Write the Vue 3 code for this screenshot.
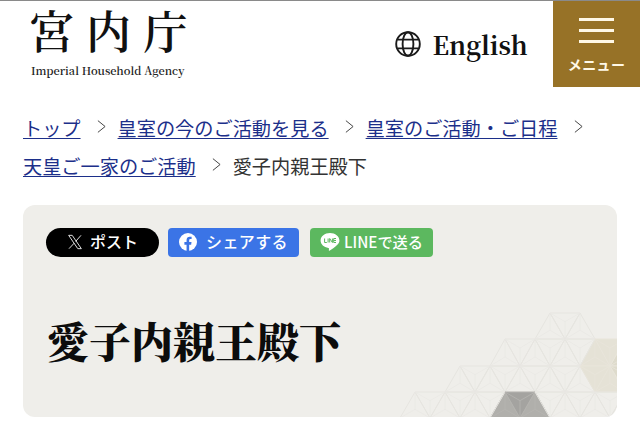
<script setup>
const crumbs = [
  { text: 'トップ', link: true },
  { text: '皇室の今のご活動を見る', link: true },
  { text: '皇室のご活動・ご日程', link: true },
  { text: '天皇ご一家のご活動', link: true },
  { text: '愛子内親王殿下', link: false },
]

const W = 30
const rows = [
  { y: 313, h: 26, topX: 550, botX: 535, tops: 2, bots: 3 },
  { y: 339, h: 27, topX: 505, botX: 490, tops: 5, bots: 6 },
  { y: 366, h: 26, topX: 460, botX: 445, tops: 7, bots: 8 },
  { y: 392, h: 26, topX: 415, botX: 400, tops: 9, bots: 10 },
]

// triangles of the asanoha lattice, row by row
const tris = []
rows.forEach((r, ri) => {
  const yb = r.y + r.h
  for (let i = 0; i < r.bots - 1; i++) {
    tris.push({ pts: [[r.botX + i * W, yb], [r.botX + (i + 1) * W, yb], [r.topX + i * W, r.y]], row: ri })
  }
  for (let i = 0; i < r.tops - 1; i++) {
    tris.push({ pts: [[r.topX + i * W, r.y], [r.topX + (i + 1) * W, r.y], [r.botX + (i + 1) * W, yb]], row: ri })
  }
})

const shapes = tris.map((t, i) => {
  const cx = (t.pts[0][0] + t.pts[1][0] + t.pts[2][0]) / 3
  const cy = (t.pts[0][1] + t.pts[1][1] + t.pts[2][1]) / 3
  let fill = 'none'
  let edge = '#e6e5e0'
  let spoke = '#eae9e4'
  if (Math.hypot(cx - 610, cy - 366) < 24) {
    const far = cx > 610
    fill = far ? '#dedbcc' : '#e5e2d6'
    edge = '#e8e5da'
    spoke = '#e8e5da'
  }
  if (t.row === 3 && cx > 490 && cx < 550) {
    fill = cx > 515 && cx < 535 ? '#a4a3a0' : '#b0afab'
    edge = '#b4b3af'
    spoke = '#b6b5b1'
  }
  return {
    id: i,
    fill,
    edge,
    spoke,
    points: t.pts.map(p => p.join(',')).join(' '),
    spokes: t.pts.map(p => ({ x1: cx, y1: cy, x2: p[0], y2: p[1] })),
  }
})
</script>

<template>
  <div class="page">
    <header class="site-header">
      <div class="logo">
        <div class="logo-kanji">宮内庁</div>
        <div class="logo-en">Imperial Household Agency</div>
      </div>
      <div class="lang">
        <svg class="globe" viewBox="0 0 26 26" fill="none" stroke="#1a1a1a" stroke-width="1.9">
          <circle cx="13" cy="13" r="11.8" />
          <ellipse cx="13" cy="13" rx="5.4" ry="11.8" />
          <path d="M2.600 8.600h20.800M2.600 17.400h20.800" />
        </svg>
        <span class="lang-text">English</span>
      </div>
      <div class="menu-btn">
        <div class="menu-lines">
          <span></span><span></span><span></span>
        </div>
        <div class="menu-label">メニュー</div>
      </div>
    </header>

    <nav class="crumbs">
      <div v-for="c in crumbs" :key="c.text" class="crumb">
        <a v-if="c.link" class="crumb-link" href="#">{{ c.text }}</a>
        <span v-else class="crumb-now">{{ c.text }}</span>
        <svg v-if="c.link" class="chev" viewBox="0 0 10 16" fill="none" stroke="#444" stroke-width="1.1">
          <path d="M1 1.500l8 6.500-8 6.500" />
        </svg>
      </div>
    </nav>

    <section class="card">
      <svg class="pattern" viewBox="377 287 240 130" width="240" height="130">
        <g v-for="s in shapes" :key="s.id">
          <polygon :points="s.points" :fill="s.fill" :stroke="s.edge" stroke-width="1" />
          <line v-for="(l, j) in s.spokes" :key="j" :x1="l.x1" :y1="l.y1" :x2="l.x2" :y2="l.y2" :stroke="s.spoke" stroke-width="0.8" />
        </g>
      </svg>

      <div class="share">
        <a class="btn btn-x" href="#">
          <svg class="x-icon" viewBox="0 0 24 24" fill="none" stroke="#fff" stroke-width="1.3">
            <path d="M2.500 2h5.300L21.500 22h-5.300zM21 2l-8 9.200M10.700 13.800L3 22" />
          </svg>
          <span>ポスト</span>
        </a>
        <a class="btn btn-fb" href="#">
          <svg class="fb-icon" viewBox="0 0 20 20">
            <circle cx="10" cy="10" r="10" fill="#fff" />
            <path d="M8.400 20v-7H6v-3h2.400V7.900c0-2.500 1.400-3.800 3.600-3.800 1 0 2 .2 2 .2v2.400h-1.200c-1.200 0-1.500.7-1.500 1.500V10h2.600l-.4 3h-2.200v7z" fill="#3b74e6" />
          </svg>
          <span>シェアする</span>
        </a>
        <a class="btn btn-line" href="#">
          <svg class="line-icon" viewBox="0 0 20 20">
            <path d="M10 1C4.800 1 .6 4.300.6 8.500c0 3.700 3.300 6.900 7.800 7.400.9.200.6 1.200.4 2.200-.1.700.4.800 1 .4 1.800-1.100 5.100-3.100 7-5.300 2.100-1.700 2.600-3.200 2.600-4.700C19.400 4.300 15.200 1 10 1z" fill="#fff" />
            <path d="M4.600 6.500v4h2.200M8.100 6.500v4M9.700 10.500v-4l2.700 4v-4M16 6.500h-2.300v4H16M13.700 8.500H16" fill="none" stroke="#5cb85f" stroke-width="1" />
          </svg>
          <span>LINEで送る</span>
        </a>
      </div>

      <h1 class="title">愛子内親王殿下</h1>
    </section>
  </div>
</template>

<style scoped>
.page {
  width: 640px;
  height: 442px;
  overflow: hidden;
  background: #fff;
  border-top: 1px solid #8a8a8a;
  box-sizing: border-box;
  font-family: "Noto Sans CJK JP", "Liberation Sans", sans-serif;
}

.site-header {
  display: flex;
  align-items: flex-start;
  height: 86px;
}

.logo {
  width: 370px;
  padding: 1px 0 0 29px;
  box-sizing: border-box;
}

.logo-kanji {
  font-family: "Noto Serif CJK JP", "Noto Sans CJK JP", serif;
  font-size: 45px;
  font-weight: 600;
  line-height: 56px;
  letter-spacing: 12px;
  color: #111;
  white-space: nowrap;
}

.logo-en {
  font-family: "Noto Serif CJK JP", "Liberation Serif", serif;
  font-weight: 600;
  font-size: 11px;
  line-height: 14px;
  margin-top: 5px;
  margin-left: 2px;
  color: #222;
  white-space: nowrap;
}

.lang {
  display: flex;
  align-items: center;
  gap: 11px;
  width: 184px;
  height: 86px;
  padding: 0 0 0 26px;
  box-sizing: border-box;
}

.globe {
  width: 26px;
  height: 26px;
}

.lang-text {
  font-family: "Noto Serif CJK JP", "Liberation Serif", serif;
  font-weight: 700;
  font-size: 25px;
  line-height: 34px;
  color: #111;
}

.menu-btn {
  width: 87px;
  height: 86px;
  background: #977227;
  display: flex;
  flex-direction: column;
  align-items: center;
  color: #fff8e6;
}

.menu-lines {
  display: flex;
  flex-direction: column;
  gap: 8px;
  padding-top: 17px;
}

.menu-lines span {
  display: block;
  width: 35px;
  height: 3px;
  background: #fff8e6;
}

.menu-label {
  font-size: 14px;
  font-weight: 700;
  line-height: 20px;
  margin-top: 11px;
  letter-spacing: 0.4px;
}

.crumbs {
  display: flex;
  flex-wrap: wrap;
  padding: 22px 23px 0;
  height: 118px;
  box-sizing: border-box;
  align-content: flex-start;
}

.crumb {
  display: flex;
  align-items: center;
  height: 38px;
  font-size: 19.2px;
  white-space: nowrap;
}

.crumb-link {
  color: #1c2f8a;
  text-decoration: underline;
  text-underline-offset: 2px;
}

.crumb-now {
  color: #333;
}

.chev {
  width: 9px;
  height: 15px;
  margin: -4px 12px 0 16px;
}

.card {
  position: relative;
  margin: 0 23px;
  height: 212px;
  background: #efeeea;
  border-radius: 12px;
  overflow: hidden;
  padding: 23px;
  box-sizing: border-box;
}

.pattern {
  position: absolute;
  right: 0;
  bottom: 0;
}

.share {
  position: relative;
  display: flex;
}

.btn {
  display: flex;
  align-items: center;
  justify-content: center;
  height: 29px;
  padding-bottom: 3px;
  color: #fff;
  font-size: 16px;
  font-weight: 500;
  text-decoration: none;
  border-radius: 4px;
  box-sizing: border-box;
}

.btn svg {
  position: relative;
  top: 1px;
}

.btn-x {
  width: 113px;
  background: #000;
  border-radius: 15px;
  gap: 7px;
}

.x-icon {
  width: 16px;
  height: 16px;
}

.btn-fb {
  width: 131px;
  margin-left: 9px;
  background: #3b74e6;
  gap: 9px;
  letter-spacing: 0.4px;
}

.fb-icon {
  width: 18px;
  height: 18px;
}

.btn-line {
  width: 123px;
  margin-left: 11px;
  background: #5cb85f;
  gap: 4px;
  font-size: 15.2px;
}

.line-icon {
  width: 20px;
  height: 20px;
}

.title {
  position: relative;
  margin: 53px 0 0 1px;
  font-family: "Noto Serif CJK JP", "Noto Sans CJK JP", serif;
  font-size: 42px;
  line-height: 60px;
  font-weight: 900;
  color: #0c0c0c;
  white-space: nowrap;
}
</style>
